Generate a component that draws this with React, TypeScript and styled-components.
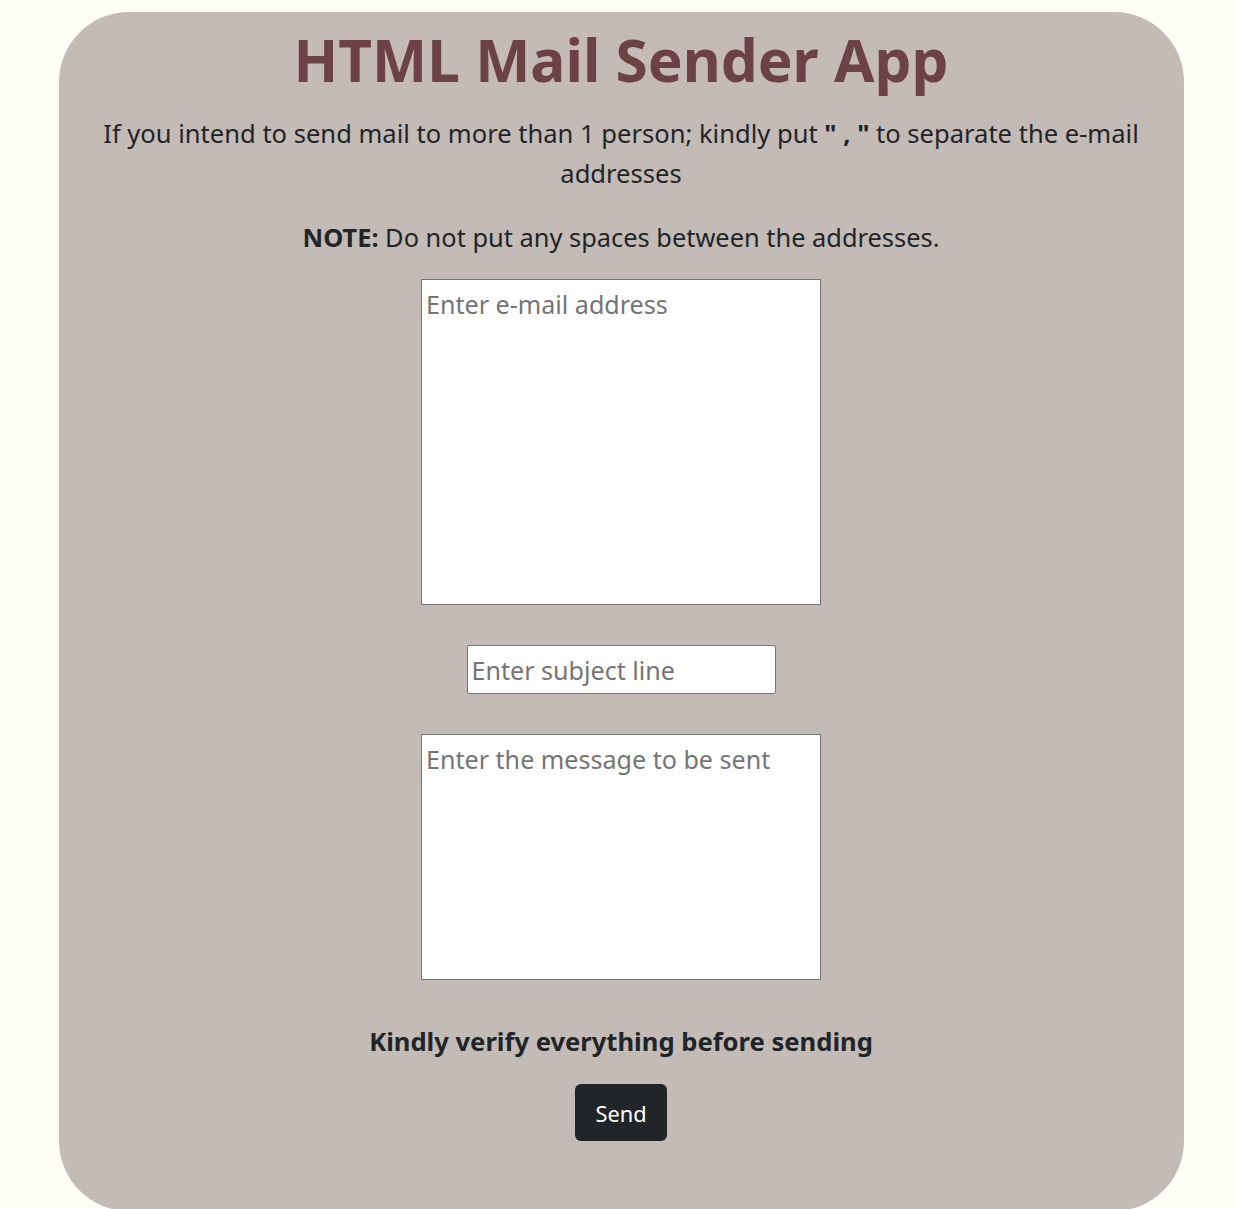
import React from "react";
import styled, { createGlobalStyle } from "styled-components";

const GlobalStyle = createGlobalStyle`
  html, body {
    margin: 0;
    padding: 0;
    background: #fffff5;
  }
  body {
    font-family: "Noto Sans", "Open Sans", sans-serif;
    color: #212529;
  }
  * { box-sizing: border-box; }
`;

const Page = styled.div`
  padding: 12px 0 0 59px;
`;

const Card = styled.main`
  width: 1125px;
  background: #c4bbb6;
  border-radius: 70px;
  padding: 12px 41px 70px 40px;
  display: flex;
  flex-direction: column;
  align-items: center;
`;

const Title = styled.h1`
  margin: 0;
  font-size: 58.5px;
  font-weight: 700;
  line-height: 70px;
  color: #6d4244;
  text-align: center;
`;

const Paragraph = styled.p<{ $top: number; $size: number }>`
  margin: ${(p) => p.$top}px 0 0;
  max-width: 1060px;
  font-size: ${(p) => p.$size}px;
  line-height: 40px;
  text-align: center;
`;

const Strong = styled.b`
  font-weight: 700;
`;

const fieldText = `
  font-family: "Noto Sans", "Open Sans", sans-serif;
  font-size: 25.1px;
  color: #212529;
  background: #ffffff;
  border: 1px solid #767676;
  outline: none;
  &::placeholder { color: #757575; opacity: 1; }
`;

const TextArea = styled.textarea<{ $top: number; $height: number }>`
  ${fieldText}
  display: block;
  margin-top: ${(p) => p.$top}px;
  width: 400px;
  height: ${(p) => p.$height}px;
  padding: 7px 4px;
  line-height: 1.362;
  resize: none;
  border-radius: 0;
`;

const Input = styled.input`
  ${fieldText}
  display: block;
  margin-top: 40px;
  width: 309px;
  height: 49px;
  padding: 0 4px;
  border-radius: 2px;
`;

const Verify = styled.h5`
  margin: 42px 0 0;
  font-size: 25.6px;
  font-weight: 700;
  line-height: 40px;
  text-align: center;
`;

const SendButton = styled.button`
  margin-top: 22px;
  height: 57px;
  padding: 2px 20.5px 0;
  border: none;
  border-radius: 6px;
  background: #212529;
  color: #ffffff;
  font-family: "Noto Sans", "Open Sans", sans-serif;
  font-size: 21.8px;
  line-height: 1;
  cursor: pointer;
`;

export default function App() {
  return (
    <>
      <GlobalStyle />
      <Page>
        <Card>
          <Title>HTML Mail Sender App</Title>
          <Paragraph $top={19} $size={25.55}>
            If you intend to send mail to more than 1 person; kindly put{" "}
            <Strong>" , "</Strong> to separate the e-mail addresses
          </Paragraph>
          <Paragraph $top={24} $size={25.4}>
            <Strong>NOTE:</Strong> Do not put any spaces between the addresses.
          </Paragraph>
          <TextArea $top={22} $height={326} placeholder="Enter e-mail address" />
          <Input type="text" placeholder="Enter subject line" />
          <TextArea $top={40} $height={246} placeholder="Enter the message to be sent" />
          <Verify>Kindly verify everything before sending</Verify>
          <SendButton type="button">Send</SendButton>
        </Card>
      </Page>
    </>
  );
}
